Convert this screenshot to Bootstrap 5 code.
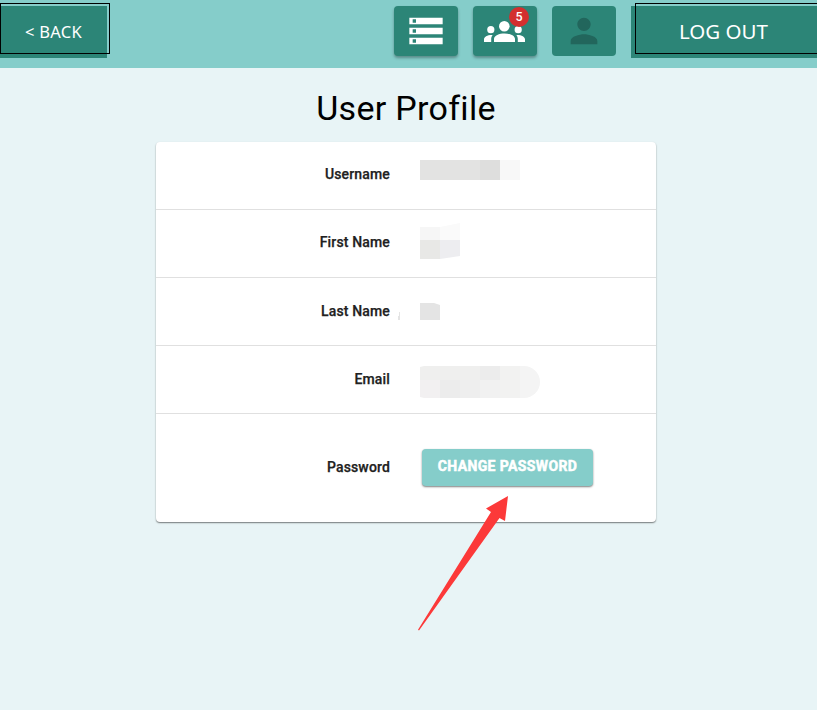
<!DOCTYPE html>
<html lang="en">
<head>
<meta charset="utf-8">
<meta name="viewport" content="width=device-width, initial-scale=1">
<title>User Profile</title>
<link href="https://cdn.jsdelivr.net/npm/bootstrap@5.3.0/dist/css/bootstrap.min.css" rel="stylesheet">
<style>
body{background:#e8f4f6;font-family:Roboto,sans-serif;color:#212121;height:710px;overflow:hidden}
.topbar{height:68px;background:#85cdca;padding-top:6px}
.wide-btn{height:52px;background:#2c8577;color:#fff;border:0;border-radius:0;padding:0;font-family:"Noto Sans",sans-serif;line-height:1;white-space:nowrap}
.wide-btn::after{content:"";position:absolute;top:-3px;height:51px;border:1px solid #000}
.back-btn{width:107px;font-size:16.5px;letter-spacing:.25px}
.back-btn::after{left:0;width:110px}
.exit-btn{width:186px;font-size:20.5px;padding:0 1px 2px 0}
.exit-btn::after{left:4px;width:183px}
.tools{gap:15px;margin-right:15px}
.tool-btn{width:64px;height:50px;padding:0;border:0;border-radius:4px;background:#2c8577;color:#fff;box-shadow:0 2px 3px rgba(0,0,0,.32)}
.tool-btn.inactive{color:#22665c;box-shadow:none}
.count{left:36px;top:1px;width:20px;height:20px;background:#d32f2f;font-size:12.5px;font-weight:500;color:#fff}
.title{font-size:34px;font-weight:400;line-height:40px;letter-spacing:.3px;color:#000;margin:20px 0 14px;padding-right:5px}
.panel{width:500px;margin-left:156px;height:380px;border:0;border-radius:4px;background:#fff;box-shadow:0 1px 1.5px rgba(0,0,0,.5)}
.field{height:68px;border-bottom:1px solid #e0e0e0;padding-top:3px}
.field.tall{height:107px;border:0;padding:0}
.field-name{width:234px;font-size:14px;font-weight:500;-webkit-text-stroke:.25px #212121;letter-spacing:.15px;line-height:20px;margin:19px 30px 0 0}
.field-name.lower{margin-top:20px}
.tall .field-name{margin-top:-2px}
.redacted{height:50px;width:160px}
.change-btn{width:171px;height:37px;margin-left:2px;border:0;border-radius:4px;padding:0 0 3px;background:#85cdca;color:#fff;font-size:14px;font-weight:700;line-height:20px;letter-spacing:.38px;-webkit-text-stroke:.5px #fff;box-shadow:0 1px 2px rgba(0,0,0,.5)}
.pointer{left:410px;top:490px}
</style>
<script src="https://cdn.jsdelivr.net/npm/bootstrap@5.3.0/dist/js/bootstrap.bundle.min.js"></script>
</head>
<body class="position-relative">
<header class="topbar d-flex align-items-start">
  <button class="wide-btn back-btn position-relative">&lt; BACK</button>
  <div class="tools d-flex ms-auto">
    <button class="tool-btn d-flex align-items-center justify-content-center" aria-label="Storage">
      <svg width="40" height="40" viewBox="0 0 24 24" fill="currentColor"><path d="M2 20h20v-4H2v4zm2-3h2v2H4v-2zM2 4v4h20V4H2zm4 3H4V5h2v2zm-4 7h20v-4H2v4zm2-3h2v2H4v-2z"/></svg>
    </button>
    <button class="tool-btn position-relative" aria-label="Groups">
      <svg class="d-block" width="64" height="50" viewBox="0 0 64 50" fill="currentColor"><circle cx="31.3" cy="20.200" r="5.300"/><circle cx="17.800" cy="23.700" r="3.600"/><circle cx="45.200" cy="23.700" r="3.600"/><path d="M21 36v-3c0-3.600 5.300-5.600 10.500-5.600S42 29.400 42 33v3zM11 36v-2.600c0-2.600 3.400-4.600 8.600-4.400-.9 1.200-1.400 2.500-1.400 4V36zM52 36v-2.600c0-2.600-3.400-4.600-8.600-4.400.9 1.200 1.400 2.500 1.400 4V36z"/></svg>
      <span class="count position-absolute rounded-circle d-flex align-items-center justify-content-center">5</span>
    </button>
    <button class="tool-btn inactive d-flex align-items-center justify-content-center" aria-label="Profile">
      <svg width="40" height="40" viewBox="0 0 24 24" fill="currentColor"><path d="M12 12c2.210 0 4-1.790 4-4s-1.790-4-4-4-4 1.790-4 4 1.790 4 4 4zm0 2c-2.670 0-8 1.340-8 4v2h16v-2c0-2.660-5.330-4-8-4z"/></svg>
    </button>
  </div>
  <button class="wide-btn exit-btn position-relative flex-shrink-0">LOG OUT</button>
</header>
<main>
  <h1 class="title text-center">User Profile</h1>
  <section class="panel">
    <div class="field d-flex align-items-start">
      <div class="field-name text-end">Username</div>
      <svg class="redacted" viewBox="0 0 160 50"><path fill="#e3e3e2" d="M0 15h60v20H0z"/><path fill="#dededd" d="M60 15h20v20H60z"/><path fill="#f8f8f8" d="M80 15h20v20H80z"/></svg>
    </div>
    <div class="field d-flex align-items-start">
      <div class="field-name text-end">First Name</div>
      <svg class="redacted" viewBox="0 0 160 50"><path fill="#f6f6f6" d="M0 14h20v13H0z"/><path fill="#fafafa" d="M20 14l20-4v17H20z"/><path fill="#e8e8e6" d="M0 27h20v19H0z"/><path fill="#ededf0" d="M20 27h20v16l-20 3z"/></svg>
    </div>
    <div class="field d-flex align-items-start">
      <div class="field-name lower text-end">Last Name</div>
      <svg class="redacted overflow-visible" viewBox="0 0 160 50"><path fill="#e4e4e4" d="M0 22h14l6 2v15H0zM-20 31v8h-2v-4h1v-4z"/></svg>
    </div>
    <div class="field d-flex align-items-start">
      <div class="field-name lower text-end">Email</div>
      <svg class="redacted" viewBox="0 0 160 50"><path fill="#efefee" d="M4 17H60v14H0V18z"/><path fill="#ececec" d="M60 17h20v14H60z"/><path fill="#f2f2f1" d="M80 17h20v32H80z"/><path fill="#f4f4f4" d="M100 17h4a16 16 0 0 1 0 32h-4z"/><path fill="#f2f0f1" d="M0 31h20v18H4L0 48z"/><path fill="#ececec" d="M20 31h20v18H20z"/><path fill="#eee" d="M40 31h20v18H40z"/><path fill="#f1f1f1" d="M60 31h20v18H60z"/></svg>
    </div>
    <div class="field tall d-flex align-items-center">
      <div class="field-name text-end">Password</div>
      <button class="change-btn">CHANGE PASSWORD</button>
    </div>
  </section>
</main>
<svg class="pointer position-absolute" width="105" height="145" viewBox="0 0 105 145"><path fill="#fc3939" d="M98 6L95 31l-5.500-3L9 140.500l-1-.8L81 22l-5-3.500z"/></svg>
</body>
</html>
